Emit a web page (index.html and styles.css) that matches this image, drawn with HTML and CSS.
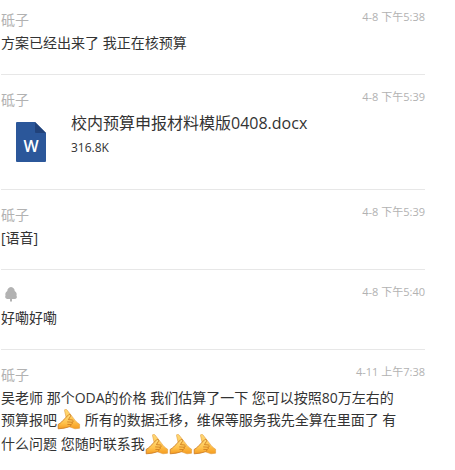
FILE: index.html
```html
<!DOCTYPE html>
<html lang="zh-CN">
<head>
<meta charset="utf-8">
<title>聊天记录</title>
<link rel="stylesheet" href="styles.css">
</head>
<body>
<svg class="defs" aria-hidden="true">
  <defs>
    <linearGradient id="skin" x1="0" y1="0" x2="0" y2="1">
      <stop offset="0" stop-color="#ffdc7a"/>
      <stop offset="0.6" stop-color="#ffc24c"/>
      <stop offset="1" stop-color="#f59c20"/>
    </linearGradient>
    <symbol id="hands" viewBox="0 0 24 24">
      <path d="M7.600 1.800C7.200 0 9 -0.200 10 1L16.600 9.400C18.200 11.800 20 13.600 22.600 15.200V19.200L18 19.800 13 18 9 8Z" fill="url(#skin)" stroke="#e09a3c" stroke-width=".6"/>
      <path d="M1.200 15.400C4 14 5.600 12 7.600 9.800L11.800 5.600C13.200 4.800 14.200 6 13.400 7.400L11.400 10.600 15.400 11C16.800 11.600 16.400 13 15 13.200 15.800 14.200 15 15.400 13.800 15.500 14 17 13 17.800 11.600 18L7 19.200 1.200 19.800Z" fill="url(#skin)" stroke="#c9761c" stroke-width=".8"/>
      <path d="M10.200 12.900L15 13.200M10.400 15.400L13.800 15.500" fill="none" stroke="#c9761c" stroke-width=".8"/>
    </symbol>
  </defs>
</svg>
<main class="chat">
  <article class="item">
    <header class="head"><span class="name">砥子</span><time class="time">4-8 下午5:38</time></header>
    <p class="message">方案已经出来了 我正在核预算</p>
  </article>
  <article class="item">
    <header class="head"><span class="name">砥子</span><time class="time">4-8 下午5:39</time></header>
    <div class="file">
      <svg class="file-icon" viewBox="0 0 30 40" role="img" aria-label="Word">
        <path d="M1 0H19L30 11V39Q30 40 29 40H1Q0 40 0 39V1Q0 0 1 0Z" fill="#2b579a"/>
        <path d="M19 0L30 11H20Q19 11 19 10Z" fill="#21427a"/>
        <text class="file-letter" x="15" y="30" text-anchor="middle">W</text>
      </svg>
      <div class="file-info">
        <div class="file-name">校内预算申报材料模版0408.docx</div>
        <div class="file-size">316.8K</div>
      </div>
    </div>
  </article>
  <article class="item">
    <header class="head"><span class="name">砥子</span><time class="time">4-8 下午5:39</time></header>
    <p class="message">[语音]</p>
  </article>
  <article class="item">
    <header class="head">
      <span class="name"><svg class="tree" viewBox="0 0 20 20" role="img" aria-label="树"><path d="M10 3C7.500 3.500 6.300 5 6.300 7 4.500 8 4 10 4.500 11.500 3.500 13.500 5 15 7 15H9V17.500H11V15H13.500C15.500 15 16.500 13.500 15.500 11.500 16 10 15.500 8 13.700 7 13.700 5 12.500 3.500 10 3Z" fill="#b2b2b2"/></svg></span>
      <time class="time">4-8 下午5:40</time>
    </header>
    <p class="message">好嘞好嘞</p>
  </article>
  <article class="item">
    <header class="head"><span class="name">砥子</span><time class="time">4-11 上午7:38</time></header>
    <p class="message">吴老师 那个ODA的价格 我们估算了一下 您可以按照80万左右的预算报吧<svg class="emoji"><use href="#hands"/></svg> 所有的数据迁移，维保等服务我先全算在里面了 有什么问题 您随时联系我<svg class="emoji"><use href="#hands"/></svg><svg class="emoji"><use href="#hands"/></svg><svg class="emoji"><use href="#hands"/></svg></p>
  </article>
</main>
</body>
</html>
```
FILE: styles.css
```css
body {
  margin: 0;
  background: #fff;
  color: #333;
  font: 14px/22px "Open Sans", "Noto Sans CJK SC", sans-serif;
}

.defs {
  position: absolute;
  width: 0;
  height: 0;
}

.chat {
  margin: 0 30px 0 1px;
}

.item {
  padding: 14px 0 20px;
  border-bottom: 1px solid #e7e7e7;
}

.item:first-child {
  padding-top: 9px;
}

.item:last-child {
  padding-bottom: 0;
  border-bottom: 0;
}

.head {
  display: flex;
  justify-content: space-between;
  align-items: flex-start;
  height: 22px;
  margin-bottom: 1px;
}

.name {
  color: #b2b2b2;
}

.time {
  color: #b2b2b2;
  font-size: 11px;
  line-height: 16px;
}

.message {
  margin: 0 20px 0 0;
}

.tree {
  display: block;
  width: 20px;
  height: 20px;
}

.emoji {
  width: 24px;
  height: 24px;
  vertical-align: middle;
}

.file {
  display: flex;
  gap: 25px;
  height: 57px;
  padding-left: 15px;
}

.file-icon {
  width: 30px;
  height: 40px;
  margin-top: 10px;
}

.file-letter {
  fill: #fff;
  font-size: 16px;
  font-weight: 600;
}

.file-name {
  margin-bottom: 3px;
  font-size: 16px;
}

.file-size {
  font-size: 12px;
}
```
